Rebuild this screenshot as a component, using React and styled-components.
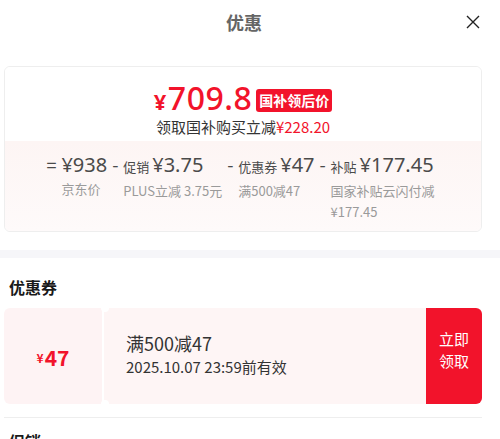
import React from 'react';
import styled, { createGlobalStyle } from 'styled-components';

const GlobalStyle = createGlobalStyle`
  html, body {
    margin: 0;
    padding: 0;
    background: #fff;
    font-family: "Noto Sans CJK SC", "Noto Sans", sans-serif;
    color: #333;
  }
  * { box-sizing: border-box; }
`;

const red = '#f2132b';

const Page = styled.div`
  width: 500px;
  height: 439px;
  overflow: hidden;
  display: flex;
  flex-direction: column;
  & > * {
    flex-shrink: 0;
  }
`;

const Header = styled.div`
  height: 44px;
  display: flex;
  align-items: center;
  justify-content: center;
  position: relative;
`;

const Title = styled.div`
  font-size: 18px;
  font-weight: 700;
  color: #666;
  margin-left: -12px;
`;

const Close = styled.div`
  position: absolute;
  right: 19px;
  top: 14px;
  width: 16px;
  height: 16px;
  display: flex;
`;

const Inset = styled.div`
  padding: 0 18px 0 4px;
`;

const SummaryCard = styled.div`
  margin-top: 22px;
  border: 1px solid #eeeeee;
  border-radius: 6px;
  overflow: hidden;
`;

const SummaryTop = styled.div`
  height: 74px;
  display: flex;
  flex-direction: column;
  align-items: center;
  padding-top: 14px;
  background: #fff;
`;

const PriceRow = styled.div`
  display: flex;
  align-items: center;
  gap: 4px;
  height: 36px;
`;

const Price = styled.div`
  color: ${red};
  font-family: "Noto Sans", "Noto Sans CJK SC", sans-serif;
  font-weight: 500;
  font-size: 32px;
  line-height: 36px;
  letter-spacing: 0.5px;
  span {
    font-size: 22px;
    font-weight: 700;
    margin-right: 1px;
  }
`;

const Badge = styled.div`
  background: ${red};
  color: #fff;
  font-size: 14px;
  font-weight: 700;
  line-height: 23px;
  padding: 0 3px;
  border-radius: 3px;
  margin-top: 2px;
`;

const Subline = styled.div`
  font-size: 15px;
  line-height: 20px;
  color: #333;
  em {
    font-style: normal;
    color: ${red};
  }
`;

const SummaryBottom = styled.div`
  height: 90px;
  background: linear-gradient(180deg, #fdf5f4 0%, #fefafa 100%);
  display: flex;
  justify-content: center;
  align-items: flex-start;
  gap: 5px;
  padding-top: 10px;
`;

const Term = styled.div`
  display: flex;
  flex-direction: column;
`;

const TermHead = styled.div`
  display: flex;
  align-items: baseline;
  white-space: nowrap;
  color: #4a4a4a;
  line-height: 26px;
`;

const Op = styled.span`
  font-size: 18px;
  width: ${p => (p.wide ? '15px' : '11px')};
  text-align: left;
`;

const TermLabel = styled.span`
  font-size: 13px;
  margin-right: 3px;
`;

const TermValue = styled.span`
  font-family: "Noto Sans", "Noto Sans CJK SC", sans-serif;
  font-size: 20px;
`;

const TermDesc = styled.div`
  padding-left: ${p => (p.wide ? '15px' : '11px')};
  font-size: 13px;
  line-height: 21px;
  color: #9a9a9a;
  max-width: ${p => (p.narrow ? '120px' : 'none')};
  white-space: ${p => (p.narrow ? 'normal' : 'nowrap')};
`;

const Band = styled.div`
  height: 8px;
  background: #f6f6f9;
  margin-top: 18px;
`;

const SectionTitle = styled.div`
  font-size: 16px;
  font-weight: 700;
  color: #1a1a1a;
  line-height: 22px;
  padding: 18px 0 0 5px;
`;

const Coupon = styled.div`
  margin-top: 10px;
  height: 96px;
  display: flex;
  position: relative;
`;

const CouponAmount = styled.div`
  width: 98px;
  background: #fef3f4;
  border-radius: 6px 0 0 6px;
  display: flex;
  align-items: center;
  justify-content: center;
  color: ${red};
  font-weight: 700;
  font-size: 21px;
  padding-top: 2px;
  span {
    font-size: 12px;
    margin-right: 1px;
  }
`;

const Notch = styled.div`
  position: absolute;
  left: 97px;
  width: 8px;
  height: 8px;
  border-radius: 50%;
  background: #fff;
  top: ${p => (p.bottom ? 'auto' : '-4px')};
  bottom: ${p => (p.bottom ? '-4px' : 'auto')};
`;

const CouponInfo = styled.div`
  flex: 1;
  margin-left: 2px;
  background: #fef5f5;
  display: flex;
  flex-direction: column;
  justify-content: center;
  padding: 0 0 2px 22px;
  color: #333;
`;

const CouponName = styled.div`
  font-size: 18px;
  line-height: 24px;
`;

const CouponDate = styled.div`
  font-size: 15px;
  line-height: 24px;
`;

const ClaimButton = styled.button`
  width: 56px;
  border: none;
  background: ${red};
  color: #fff;
  border-radius: 0 6px 6px 0;
  font-family: inherit;
  font-size: 15px;
  line-height: 22px;
  padding: 0 0 12px;
`;

const Divider = styled.div`
  height: 1px;
  background: #eeeeee;
  margin-top: 13px;
`;

const NextTitle = styled(SectionTitle)`
  padding-top: 12px;
`;

const terms = [
  { op: '=', value: '¥938', desc: '京东价', wide: true },
  { op: '-', label: '促销', value: '¥3.75', desc: 'PLUS立减 3.75元' },
  { op: '-', label: '优惠券', value: '¥47', desc: '满500减47' },
  { op: '-', label: '补贴', value: '¥177.45', desc: '国家补贴云闪付减 ¥177.45', narrow: true },
];

export default function App() {
  return (
    <Page>
      <GlobalStyle />
      <Header>
        <Title>优惠</Title>
        <Close>
          <svg width="16" height="16" viewBox="0 0 16 16">
            <path d="M2 2L14 14M14 2L2 14" stroke="#222" strokeWidth="1.4" fill="none" />
          </svg>
        </Close>
      </Header>
      <Inset>
        <SummaryCard>
          <SummaryTop>
            <PriceRow>
              <Price><span>¥</span>709.8</Price>
              <Badge>国补领后价</Badge>
            </PriceRow>
            <Subline>领取国补购买立减<em>¥228.20</em></Subline>
          </SummaryTop>
          <SummaryBottom>
            {terms.map(t => (
              <Term key={t.value}>
                <TermHead>
                  <Op wide={t.wide}>{t.op}</Op>
                  {t.label && <TermLabel>{t.label}</TermLabel>}
                  <TermValue>{t.value}</TermValue>
                </TermHead>
                <TermDesc wide={t.wide} narrow={t.narrow}>{t.desc}</TermDesc>
              </Term>
            ))}
          </SummaryBottom>
        </SummaryCard>
      </Inset>
      <Band />
      <Inset>
        <SectionTitle>优惠券</SectionTitle>
        <Coupon>
          <CouponAmount><span>¥</span>47</CouponAmount>
          <Notch />
          <Notch bottom />
          <CouponInfo>
            <CouponName>满500减47</CouponName>
            <CouponDate>2025.10.07 23:59前有效</CouponDate>
          </CouponInfo>
          <ClaimButton>立即<br />领取</ClaimButton>
        </Coupon>
        <Divider />
        <NextTitle>促销</NextTitle>
      </Inset>
    </Page>
  );
}
